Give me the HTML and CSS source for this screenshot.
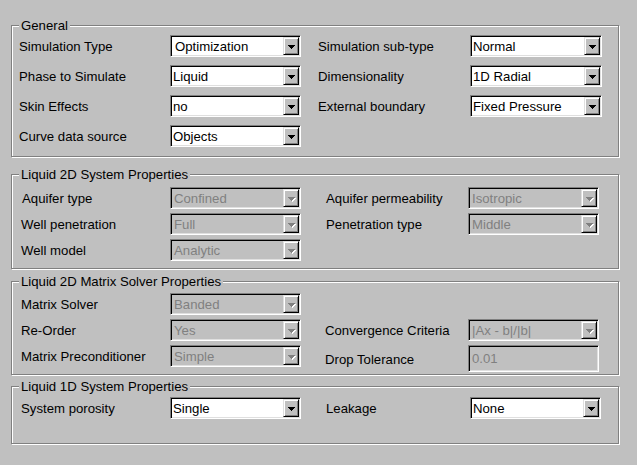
FILE: index.html
```html
<!DOCTYPE html>
<html>
<head>
<meta charset="utf-8">
<title>Simulation Settings</title>
<link rel="stylesheet" href="styles.css">
</head>
<body>
<div class="page">
  <fieldset class="group group--general">
    <legend>General</legend>
    <div class="rows">
      <div class="row">
        <span class="lab">Simulation Type</span>
        <div class="combo combo--pad"><span class="val">Optimization</span><span class="btn"><svg width="7" height="4" viewBox="0 0 7 4" shape-rendering="crispEdges"><path d="M0 0h7v1h-1v1h-1v1h-1v1h-1v-1h-1v-1h-1v-1h-1z"/></svg></span></div>
        <span class="lab r">Simulation sub-type</span>
        <div class="combo"><span class="val">Normal</span><span class="btn"><svg width="7" height="4" viewBox="0 0 7 4" shape-rendering="crispEdges"><path d="M0 0h7v1h-1v1h-1v1h-1v1h-1v-1h-1v-1h-1v-1h-1z"/></svg></span></div>
      </div>
      <div class="row">
        <span class="lab">Phase to Simulate</span>
        <div class="combo"><span class="val">Liquid</span><span class="btn"><svg width="7" height="4" viewBox="0 0 7 4" shape-rendering="crispEdges"><path d="M0 0h7v1h-1v1h-1v1h-1v1h-1v-1h-1v-1h-1v-1h-1z"/></svg></span></div>
        <span class="lab r">Dimensionality</span>
        <div class="combo"><span class="val">1D Radial</span><span class="btn"><svg width="7" height="4" viewBox="0 0 7 4" shape-rendering="crispEdges"><path d="M0 0h7v1h-1v1h-1v1h-1v1h-1v-1h-1v-1h-1v-1h-1z"/></svg></span></div>
      </div>
      <div class="row">
        <span class="lab">Skin Effects</span>
        <div class="combo"><span class="val">no</span><span class="btn"><svg width="7" height="4" viewBox="0 0 7 4" shape-rendering="crispEdges"><path d="M0 0h7v1h-1v1h-1v1h-1v1h-1v-1h-1v-1h-1v-1h-1z"/></svg></span></div>
        <span class="lab r">External boundary</span>
        <div class="combo"><span class="val">Fixed Pressure</span><span class="btn"><svg width="7" height="4" viewBox="0 0 7 4" shape-rendering="crispEdges"><path d="M0 0h7v1h-1v1h-1v1h-1v1h-1v-1h-1v-1h-1v-1h-1z"/></svg></span></div>
      </div>
      <div class="row">
        <span class="lab">Curve data source</span>
        <div class="combo"><span class="val">Objects</span><span class="btn"><svg width="7" height="4" viewBox="0 0 7 4" shape-rendering="crispEdges"><path d="M0 0h7v1h-1v1h-1v1h-1v1h-1v-1h-1v-1h-1v-1h-1z"/></svg></span></div>
      </div>
    </div>
  </fieldset>

  <fieldset class="group group--system">
    <legend>Liquid 2D System Properties</legend>
    <div class="rows">
      <div class="row">
        <span class="lab lab--in">Aquifer type</span>
        <div class="combo combo--off"><span class="val">Confined</span><span class="btn"><svg width="7" height="4" viewBox="0 0 7 4" shape-rendering="crispEdges"><path d="M0 0h7v1h-1v1h-1v1h-1v1h-1v-1h-1v-1h-1v-1h-1z"/></svg></span></div>
        <span class="lab r">Aquifer permeability</span>
        <div class="combo combo--off"><span class="val">Isotropic</span><span class="btn"><svg width="7" height="4" viewBox="0 0 7 4" shape-rendering="crispEdges"><path d="M0 0h7v1h-1v1h-1v1h-1v1h-1v-1h-1v-1h-1v-1h-1z"/></svg></span></div>
      </div>
      <div class="row">
        <span class="lab">Well penetration</span>
        <div class="combo combo--off"><span class="val">Full</span><span class="btn"><svg width="7" height="4" viewBox="0 0 7 4" shape-rendering="crispEdges"><path d="M0 0h7v1h-1v1h-1v1h-1v1h-1v-1h-1v-1h-1v-1h-1z"/></svg></span></div>
        <span class="lab r">Penetration type</span>
        <div class="combo combo--off"><span class="val">Middle</span><span class="btn"><svg width="7" height="4" viewBox="0 0 7 4" shape-rendering="crispEdges"><path d="M0 0h7v1h-1v1h-1v1h-1v1h-1v-1h-1v-1h-1v-1h-1z"/></svg></span></div>
      </div>
      <div class="row">
        <span class="lab">Well model</span>
        <div class="combo combo--off"><span class="val">Analytic</span><span class="btn"><svg width="7" height="4" viewBox="0 0 7 4" shape-rendering="crispEdges"><path d="M0 0h7v1h-1v1h-1v1h-1v1h-1v-1h-1v-1h-1v-1h-1z"/></svg></span></div>
      </div>
    </div>
  </fieldset>

  <fieldset class="group group--matrix">
    <legend>Liquid 2D Matrix Solver Properties</legend>
    <div class="rows">
      <div class="row">
        <span class="lab">Matrix Solver</span>
        <div class="combo combo--off"><span class="val">Banded</span><span class="btn"><svg width="7" height="4" viewBox="0 0 7 4" shape-rendering="crispEdges"><path d="M0 0h7v1h-1v1h-1v1h-1v1h-1v-1h-1v-1h-1v-1h-1z"/></svg></span></div>
      </div>
      <div class="row">
        <span class="lab">Re-Order</span>
        <div class="combo combo--off"><span class="val">Yes</span><span class="btn"><svg width="7" height="4" viewBox="0 0 7 4" shape-rendering="crispEdges"><path d="M0 0h7v1h-1v1h-1v1h-1v1h-1v-1h-1v-1h-1v-1h-1z"/></svg></span></div>
        <span class="lab r">Convergence Criteria</span>
        <div class="combo combo--off"><span class="val">|Ax - b|/|b|</span><span class="btn"><svg width="7" height="4" viewBox="0 0 7 4" shape-rendering="crispEdges"><path d="M0 0h7v1h-1v1h-1v1h-1v1h-1v-1h-1v-1h-1v-1h-1z"/></svg></span></div>
      </div>
      <div class="row">
        <span class="lab">Matrix Preconditioner</span>
        <div class="combo combo--off"><span class="val">Simple</span><span class="btn"><svg width="7" height="4" viewBox="0 0 7 4" shape-rendering="crispEdges"><path d="M0 0h7v1h-1v1h-1v1h-1v1h-1v-1h-1v-1h-1v-1h-1z"/></svg></span></div>
        <span class="lab r lab--mid">Drop Tolerance</span>
        <div class="field">0.01</div>
      </div>
    </div>
  </fieldset>

  <fieldset class="group group--oned">
    <legend>Liquid 1D System Properties</legend>
    <div class="rows">
      <div class="row">
        <span class="lab">System porosity</span>
        <div class="combo"><span class="val">Single</span><span class="btn"><svg width="7" height="4" viewBox="0 0 7 4" shape-rendering="crispEdges"><path d="M0 0h7v1h-1v1h-1v1h-1v1h-1v-1h-1v-1h-1v-1h-1z"/></svg></span></div>
        <span class="lab r">Leakage</span>
        <div class="combo"><span class="val">None</span><span class="btn"><svg width="7" height="4" viewBox="0 0 7 4" shape-rendering="crispEdges"><path d="M0 0h7v1h-1v1h-1v1h-1v1h-1v-1h-1v-1h-1v-1h-1z"/></svg></span></div>
      </div>
    </div>
  </fieldset>
</div>
</body>
</html>
```
FILE: styles.css
```css
html, body {
  margin: 0;
  padding: 0;
  background: #c0c0c0;
}

body {
  width: 637px;
  height: 465px;
  overflow: hidden;
  font-family: "Liberation Sans", Arial, sans-serif;
  font-size: 13.2px;
  color: #000;
}

.page {
  display: flex;
  flex-direction: column;
  width: 608px;
  padding: 18px 0 0 11px;
}

.group {
  margin: 0;
  min-width: 0;
  border: 1px solid #808080;
  box-shadow: 1px 1px 0 #fff, inset 1px 1px 0 #fff;
  padding: 2px 0 9px 7px;
  --c1: 151px;
  --c2: 131px;
  --g: 17px;
  --c3: 152px;
  --c4: 132px;
}

.group legend {
  padding: 0 2px;
  line-height: 15px;
  height: 15px;
  background: #c0c0c0;
}

.group--system {
  margin-top: 10px;
  padding: 5px 0 7px 7px;
  --g: 25px;
  --c3: 142px;
  --c4: 131px;
}

.group--matrix {
  margin-top: 5px;
  padding: 4px 0 2px 7px;
  --g: 24px;
  --c3: 143px;
  --c4: 131px;
}

.group--oned {
  margin-top: 4px;
  padding: 3px 0 24px 7px;
  --g: 25px;
  --c3: 144px;
  --c4: 131px;
}

.rows {
  display: flex;
  flex-direction: column;
  gap: 4px;
}

.group--general .rows {
  gap: 8px;
}

.row {
  display: grid;
  grid-template-columns: var(--c1) var(--c2) calc(var(--g) + var(--c3)) var(--c4);
  align-items: start;
}

.lab {
  height: 22px;
  box-sizing: border-box;
  line-height: 21px;
  padding-top: 1px;
  white-space: nowrap;
}

.group--system .lab,
.group--matrix .lab,
.group--oned .lab {
  padding-left: 2px;
}

.group--system .lab--in {
  padding-left: 3px;
}

.lab.r {
  padding-left: var(--g);
}

.lab--mid {
  align-self: center;
}

.combo {
  box-sizing: border-box;
  height: 22px;
  display: flex;
  padding: 1px;
  background: #fff;
  border: 1px solid;
  border-color: #808080 #fff #fff #808080;
  box-shadow: inset 1px 1px 0 #000, inset -1px -1px 0 #dfdfdf;
}

.val {
  flex: 1;
  height: 18px;
  line-height: 20px;
  padding-left: 1px;
  white-space: nowrap;
  overflow: hidden;
}

.combo--pad .val {
  padding-left: 3px;
}

.btn {
  box-sizing: border-box;
  width: 16px;
  height: 18px;
  display: flex;
  align-items: center;
  justify-content: center;
  background: #c0c0c0;
  border: 1px solid;
  border-color: #dfdfdf #000 #000 #dfdfdf;
  box-shadow: inset 1px 1px 0 #fff, inset -1px -1px 0 #808080;
}

.btn svg {
  display: block;
  fill: #000;
  margin-top: 1px;
}

.combo--off {
  background: #c0c0c0;
  color: #808080;
}

.combo--off .val {
  padding-left: 2px;
}

.combo--off .btn svg {
  fill: #808080;
  filter: drop-shadow(1px 1px 0 #fff);
}

.field {
  box-sizing: border-box;
  height: 27px;
  padding: 1px 3px;
  line-height: 23px;
  background: #c0c0c0;
  color: #808080;
  border: 1px solid;
  border-color: #808080 #fff #fff #808080;
  box-shadow: inset 1px 1px 0 #000, inset -1px -1px 0 #dfdfdf;
}
```
